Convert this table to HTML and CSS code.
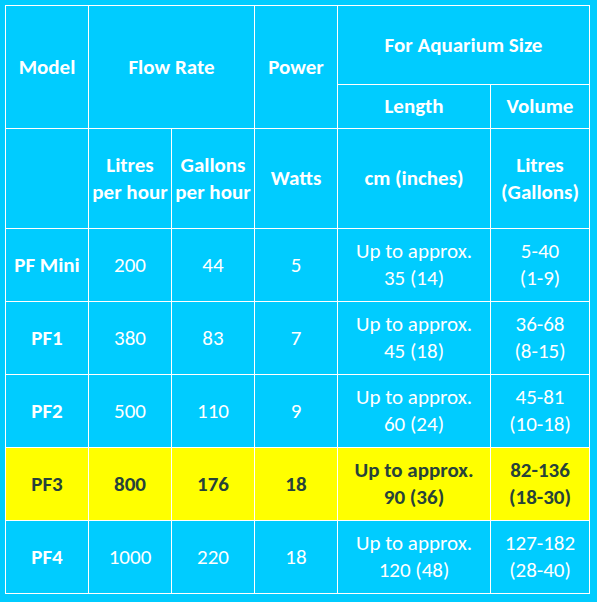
FILE: index.html
```html
<!DOCTYPE html>
<html lang="en">
<head>
  <meta charset="utf-8" />
  <meta name="viewport" content="width=device-width, initial-scale=1" />
  <title>Pump Flow Chart</title>
  <link rel="stylesheet" href="styles.css">
</head>
<body>
<table class="pf-table">
  <colgroup>
    <col class="pf-col--narrow" />
    <col class="pf-col--narrow" />
    <col class="pf-col--narrow" />
    <col class="pf-col--narrow" />
    <col class="pf-col--length" />
    <col class="pf-col--volume" />
  </colgroup>
  <thead>
    <tr class="pf-row--top">
      <th rowspan="2">Model</th>
      <th colspan="2" rowspan="2">Flow Rate</th>
      <th rowspan="2">Power</th>
      <th colspan="2">For Aquarium Size</th>
    </tr>
    <tr class="pf-row--sub">
      <th>Length</th>
      <th>Volume</th>
    </tr>
    <tr class="pf-row--units">
      <th></th>
      <th>Litres<br />per hour</th>
      <th>Gallons<br />per hour</th>
      <th>Watts</th>
      <th>cm (inches)</th>
      <th>Litres<br />(Gallons)</th>
    </tr>
  </thead>
  <tbody>
    <tr class="pf-row">
      <th>PF Mini</th>
      <td>200</td>
      <td>44</td>
      <td>5</td>
      <td>Up to approx.<br />35 (14)</td>
      <td>5-40<br />(1-9)</td>
    </tr>
    <tr class="pf-row">
      <th>PF1</th>
      <td>380</td>
      <td>83</td>
      <td>7</td>
      <td>Up to approx.<br />45 (18)</td>
      <td>36-68<br />(8-15)</td>
    </tr>
    <tr class="pf-row">
      <th>PF2</th>
      <td>500</td>
      <td>110</td>
      <td>9</td>
      <td>Up to approx.<br />60 (24)</td>
      <td>45-81<br />(10-18)</td>
    </tr>
    <tr class="pf-row pf-row--hot">
      <th>PF3</th>
      <td>800</td>
      <td>176</td>
      <td>18</td>
      <td>Up to approx.<br />90 (36)</td>
      <td>82-136<br />(18-30)</td>
    </tr>
    <tr class="pf-row">
      <th>PF4</th>
      <td>1000</td>
      <td>220</td>
      <td>18</td>
      <td>Up to approx.<br />120 (48)</td>
      <td>127-182<br />(28-40)</td>
    </tr>
  </tbody>
</table>
</body>
</html>
```

FILE: styles.css
```css
:root {
  --vesi: #00ccff;
  --viiva: #ffffff;
  --keltainen: #ffff00;
  --tumma: #27423a;
}
html {
  height: 100%;
}
body {
  margin: 0;
  padding: 5px;
  background-color: var(--vesi);
  font-family: Carlito, Calibri, Lato, "Liberation Sans", sans-serif;
  color: #fff;
}
.pf-table {
  border-collapse: collapse;
  table-layout: fixed;
  width: 584px;
  font-size: 21px;
  line-height: 27px;
}
.pf-col--narrow {
  width: 83px;
}
.pf-col--length {
  width: 153px;
}
.pf-col--volume {
  width: 99px;
}
.pf-table th,
.pf-table td {
  border: 1px solid var(--viiva);
  padding: 0;
  text-align: center;
  vertical-align: middle;
  white-space: nowrap;
}
.pf-table th {
  font-weight: bold;
}
.pf-table td {
  font-weight: normal;
}
.pf-row--top {
  height: 79px;
}
.pf-row--sub {
  height: 44px;
}
.pf-row--units {
  height: 100px;
}
.pf-row {
  height: 73px;
}
.pf-row--hot {
  background-color: var(--keltainen);
  color: var(--tumma);
}
.pf-row--hot td {
  font-weight: bold;
}
```
